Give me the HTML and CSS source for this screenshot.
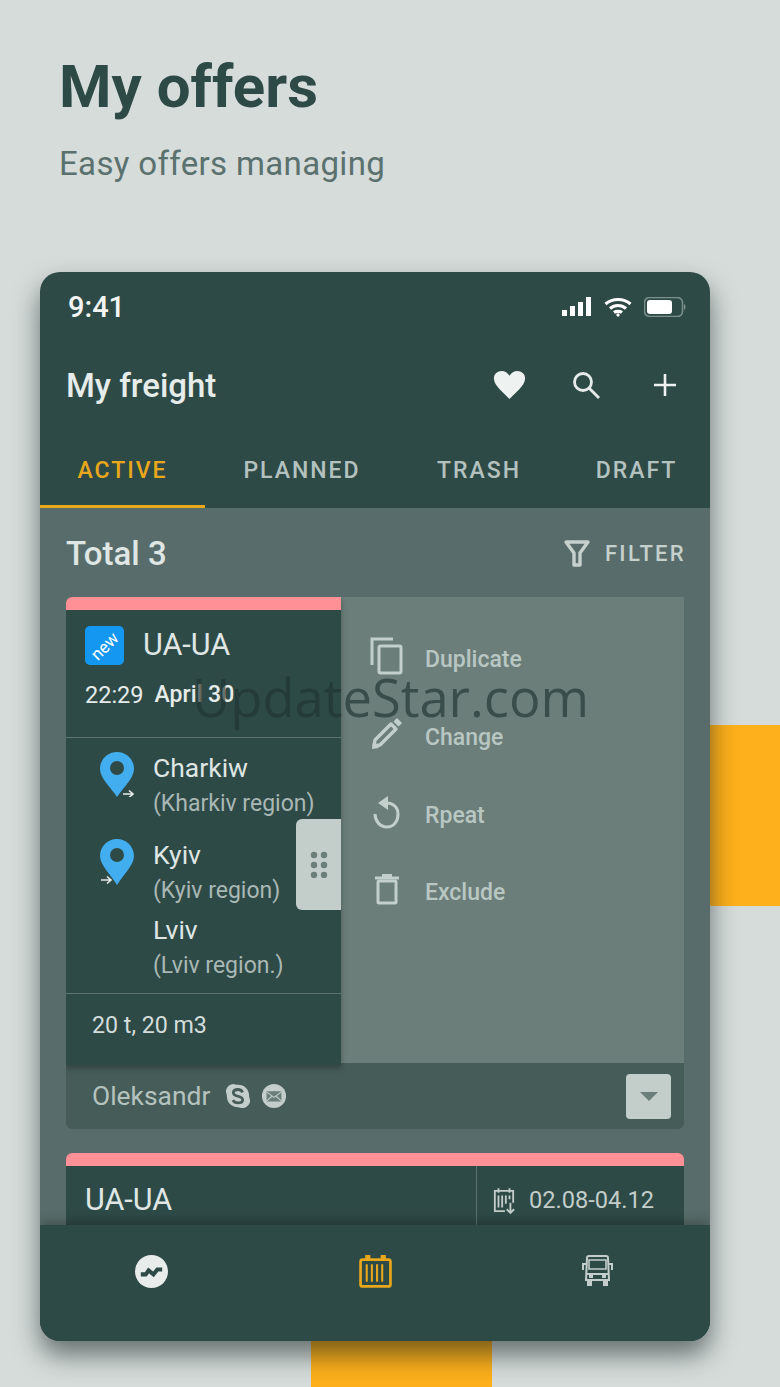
FILE: index.html
```html
<!DOCTYPE html>
<html lang="en">
<head>
    <meta charset="UTF-8">
    <meta name="viewport" content="width=device-width, initial-scale=1.0">
    <title>My offers</title>
    <link rel="stylesheet" href="styles.css">
</head>
<body>
    <div class="deco deco-right"></div>
    <div class="deco deco-bottom"></div>

    <header class="intro">
        <h1>My offers</h1>
        <p>Easy offers managing</p>
    </header>

    <div class="phone">
        <div class="status-bar">
            <span class="clock">9:41</span>
            <div class="status-icons">
                <svg width="30" height="20" viewBox="0 0 30 20"><path fill="#fff" d="M0 13h5v6H0zM8 9h5v10H8zM16 5h5v14h-5zM24 0h5v19h-5z"/></svg>
                <svg width="28" height="20" viewBox="0 0 28 20" fill="none" stroke="#fff" stroke-width="3.200"><path d="M1.500 7c7-6 18-6 25 0M6 11.500c4.500-4 11.500-4 16 0M10 15.500c2-1.500 6-1.500 8 0"/><circle cx="14" cy="18" r="1.200" fill="#fff" stroke-width="1"/></svg>
                <svg width="42" height="20" viewBox="0 0 42 20"><rect x="0.500" y="0.500" width="38" height="19" rx="5" fill="none" stroke="#7d918d" stroke-width="1.500"/><rect x="3" y="3" width="25" height="14" rx="3" fill="#fff"/><path fill="#7d918d" d="M40 7c1 .5 1.500 1.500 1.500 3s-.5 2.500-1.500 3z"/></svg>
            </div>
        </div>

        <div class="toolbar">
            <span class="toolbar-title">My freight</span>
            <div class="toolbar-icons">
                <svg width="33" height="30" viewBox="0 0 36 32" preserveAspectRatio="none"><path fill="#eef2f1" d="M18 31C12 24 1 17 1 9 1 4 5 1 9.500 1c3.500 0 6.500 2 8.500 5 2-3 5-5 8.500-5C31 1 35 4 35 9c0 8-11 15-17 22z"/></svg>
                <svg width="30" height="30" viewBox="0 0 30 30" fill="none" stroke="#e6ecea" stroke-width="2.800"><circle cx="12" cy="12" r="8.500"/><path d="M18 18l10 10"/></svg>
                <svg class="plus-icon" width="24" height="24" viewBox="0 0 24 24" fill="none" stroke="#eef2f1" stroke-width="2.600"><path d="M12 1v22M1 12h22"/></svg>
            </div>
        </div>

        <nav class="tabs">
            <a class="tab tab-active">ACTIVE</a>
            <a class="tab">PLANNED</a>
            <a class="tab">TRASH</a>
            <a class="tab">DRAFT</a>
        </nav>

        <main class="content">
            <div class="total-row">
                <span class="total">Total 3</span>
                <div class="filter">
                    <svg width="28" height="28" viewBox="0 0 28 28" fill="none" stroke="#c6d1ce" stroke-width="3.400"><path d="M3 3h22l-8 11v12h-6V14z" stroke-linejoin="round"/></svg>
                    <span>FILTER</span>
                </div>
            </div>

            <section class="offer">
                <div class="offer-main">
                    <div class="offer-panel">
                        <div class="pink-bar"></div>
                        <div class="offer-head">
                            <div class="head-line">
                                <div class="badge-new"><span>new</span></div>
                                <span class="route-code">UA-UA</span>
                            </div>
                            <div class="date-line"><span>22:29</span><span class="date-strong">April 30</span></div>
                        </div>
                        <div class="stops">
                            <div class="stop">
                                <svg class="pin" width="36" height="46" viewBox="0 0 36 46"><path fill="#42aef0" d="M18 1C9 1 1 8 1 18c0 9 11 19 17 28 6-9 17-19 17-28C35 8 27 1 18 1z"/><circle cx="18" cy="17" r="7" fill="#2e4a47"/><path fill="none" stroke="#e6ecea" stroke-width="1.600" d="M24 43h10M30 39.500l4 3.500-4 3.500"/></svg>
                                <div>
                                    <div class="city">Charkiw</div>
                                    <div class="region">(Kharkiv region)</div>
                                </div>
                            </div>
                            <div class="stop stop-kyiv">
                                <svg class="pin" width="36" height="48" viewBox="0 0 36 48"><path fill="#42aef0" d="M18 1C9 1 1 8 1 18c0 9 11 19 17 29 6-10 17-20 17-29C35 8 27 1 18 1z"/><circle cx="18" cy="17" r="7" fill="#2e4a47"/><path fill="none" stroke="#e6ecea" stroke-width="1.600" d="M2 42h10M8 38.500l4 3.500-4 3.500"/></svg>
                                <div>
                                    <div class="city">Kyiv</div>
                                    <div class="region">(Kyiv region)</div>
                                </div>
                            </div>
                            <div class="stop stop-lviv">
                                <div class="pin-space"></div>
                                <div>
                                    <div class="city">Lviv</div>
                                    <div class="region">(Lviv region.)</div>
                                </div>
                            </div>
                        </div>
                        <div class="cargo">20 t, 20 m3</div>
                        <div class="handle">
                            <svg width="18" height="27" viewBox="0 0 18 27" fill="#6b7e7a"><circle cx="4" cy="4" r="3.200"/><circle cx="14" cy="4" r="3.200"/><circle cx="4" cy="14" r="3.200"/><circle cx="14" cy="14" r="3.200"/><circle cx="4" cy="24" r="3.200"/><circle cx="14" cy="24" r="3.200"/></svg>
                        </div>
                    </div>

                    <div class="offer-menu">
                        <div class="menu-item">
                            <svg width="34" height="38" viewBox="0 0 34 38" fill="none" stroke="#c2cfcb" stroke-width="3"><path d="M23 2H2v26"/><rect x="9" y="9" width="22" height="27" rx="1.500"/></svg>
                            <span>Duplicate</span>
                        </div>
                        <div class="menu-item">
                            <svg width="34" height="32" viewBox="0 0 34 32" fill="none" stroke="#c2cfcb" stroke-width="3.400"><path d="M4 28l1-6L21 6l5 5-16 16z" stroke-linejoin="round"/><path fill="#c2cfcb" stroke="none" d="M23.500 3.500L27 0l5 5-3.500 3.500zM2 31l1-7 6 6z"/></svg>
                            <span>Change</span>
                        </div>
                        <div class="menu-item">
                            <svg width="34" height="33" viewBox="0 0 34 33" fill="none" stroke="#c2cfcb" stroke-width="3"><path d="M5 18c0 7 5 13 12 13s11-6 11-13S23 7 16 7"/><path fill="#c2cfcb" stroke="none" d="M18 0v14L8 7z"/></svg>
                            <span>Rpeat</span>
                        </div>
                        <div class="menu-item">
                            <svg width="34" height="31" viewBox="0 0 34 31" fill="none" stroke="#c2cfcb" stroke-width="3"><rect x="8" y="7" width="18" height="22" rx="1"/><path d="M5 4h24M12 1.500h10"/></svg>
                            <span>Exclude</span>
                        </div>
                    </div>
                </div>

                <div class="offer-foot">
                    <span class="contact">Oleksandr</span>
                    <svg class="foot-icon" width="26" height="26" viewBox="0 0 28 28"><path fill="#c3cdca" d="M9 1c2 0 3 1 5 1 7 0 12 5 12 12 0 2 1 3 1 5 0 4-4 8-8 8-2 0-3-1-5-1-7 0-12-5-12-12 0-2-1-3-1-5 0-4 4-8 8-8z"/><path fill="none" stroke="#465c59" stroke-width="3" d="M19 10c-1-2-3-3-5-3-3 0-5 1.500-5 3.500 0 5 10 2.500 10 7.500 0 2-2 3.500-5 3.500-2.500 0-4.500-1-5.500-3"/></svg>
                    <svg class="foot-icon" width="26" height="26" viewBox="0 0 28 28"><circle cx="14" cy="14" r="13" fill="#c3cdca"/><rect x="6" y="9" width="16" height="11" rx="1" fill="#6b7e7a"/><path fill="none" stroke="#c3cdca" stroke-width="1.200" d="M6 9.500l8 6 8-6M6 19.500l6-5.500M22 19.500l-6-5.500"/></svg>
                    <div class="expand"><span class="caret"></span></div>
                </div>
            </section>

            <section class="offer offer-next">
                <div class="pink-bar"></div>
                <div class="next-body">
                    <span class="route-code">UA-UA</span>
                    <div class="next-date">
                        <svg width="22" height="30" viewBox="0 0 24 30" fill="none" stroke="#c3cdca" stroke-width="2"><path d="M13 26H2V4h20v13"/><path d="M6 1v5M18 1v5M6 9v13M10 9v13M14 9v9M18 9v4"/><path d="M19 17v11M15 24l4 4 4-4"/></svg>
                        <span>02.08-04.12</span>
                    </div>
                </div>
            </section>
        </main>

        <nav class="bottom-nav">
            <svg width="33" height="33" viewBox="0 0 34 34"><circle cx="17" cy="17" r="17" fill="#e8ecea"/><path fill="none" stroke="#2e4a47" stroke-width="4.200" d="M6 20h5l3-4 5 4 4-5h5"/></svg>
            <svg width="33" height="33" viewBox="0 0 32 32" fill="none" stroke="#e9a71c" stroke-width="2.600"><rect x="1.500" y="4.500" width="29" height="26" rx="2"/><path stroke-width="2" d="M7.500 9v17M12.500 9v17M17.500 9v17M22.500 9v17"/><path fill="#e9a71c" stroke="none" d="M6 0h5v5H6zM21 0h5v5h-5z"/></svg>
            <svg width="31" height="31" viewBox="0 0 31 31" fill="none" stroke="#c3cdca" stroke-width="2"><path d="M5 3c0-1 1-2 2-2h17c1 0 2 1 2 2l1 22H4z"/><path d="M7 5h17v9H7z" stroke-width="1.600"/><path d="M5 9H1v6M26 9h4v6M5 19h21"/><path fill="#c3cdca" stroke="none" d="M7 20h4v3H7zM20 20h4v3h-4zM5 25h5v6H5zM21 25h5v6h-5z"/></svg>
        </nav>
    </div>

    <div class="watermark">UpdateStar.com</div>
</body>
</html>
```

FILE: styles.css
```css
* {
    box-sizing: border-box;
}

body {
    background-color: #d5dcda;
    font-family: Roboto, "Liberation Sans", sans-serif;
    margin: 0;
    width: 780px;
    height: 1387px;
    position: relative;
    overflow: hidden;
}

.deco {
    position: absolute;
    background-color: #fdb01b;
}

.deco-right {
    left: 710px;
    top: 725px;
    width: 70px;
    height: 181px;
}

.deco-bottom {
    left: 311px;
    top: 1300px;
    width: 181px;
    height: 87px;
}

.intro {
    height: 272px;
    padding: 50px 0 0 59px;
}

.intro h1 {
    margin: 0;
    font-size: 60px;
    line-height: 74px;
    font-weight: 700;
    color: #2e4a47;
}

.intro p {
    margin: 15px 0 0;
    font-size: 33px;
    line-height: 50px;
    color: #5b716e;
    letter-spacing: 0.35px;
}

.phone {
    position: relative;
    margin-left: 40px;
    width: 670px;
    height: 1069px;
    background-color: #2e4a47;
    border-radius: 20px;
    overflow: hidden;
    display: flex;
    flex-direction: column;
    box-shadow: 0 14px 26px rgba(15, 25, 25, 0.55);
}

.status-bar {
    height: 70px;
    padding: 0 24px 0 28px;
    display: flex;
    justify-content: space-between;
    align-items: center;
}

.clock {
    color: #f2f5f4;
    font-size: 29px;
    font-weight: 500;
}

.status-icons {
    display: flex;
    align-items: center;
    gap: 12px;
}

.toolbar {
    height: 72px;
    padding: 14px 33px 0 26px;
    display: flex;
    justify-content: space-between;
    align-items: center;
}

.toolbar-title {
    color: #e6ecea;
    font-size: 33px;
    font-weight: 500;
}

.toolbar-icons {
    display: flex;
    align-items: center;
    gap: 45px;
}

.plus-icon {
    margin-left: 7px;
}

.tabs {
    height: 94px;
    display: flex;
}

.tab {
    color: #b4c2bf;
    font-size: 23px;
    font-weight: 500;
    letter-spacing: 2px;
    text-align: center;
    height: 100%;
    padding-top: 39px;
    line-height: 36px;
}

.tab:nth-child(1) {
    width: 165px;
}

.tab:nth-child(2) {
    width: 194px;
}

.tab:nth-child(3) {
    width: 160px;
}

.tab:nth-child(4) {
    width: 151px;
    padding-left: 4px;
}

.tab-active {
    color: #e9a71c;
    border-bottom: 3px solid #e9a71c;
}

.content {
    flex: 1;
    background-color: #586d6b;
    overflow: hidden;
    padding: 0 26px;
}

.total-row {
    height: 89px;
    padding-top: 1px;
    display: flex;
    justify-content: space-between;
    align-items: center;
}

.total {
    color: #dfe6e4;
    font-size: 33px;
    font-weight: 500;
}

.filter {
    display: flex;
    align-items: center;
    gap: 14px;
    margin-right: -2px;
    color: #c6d1ce;
    font-size: 22px;
    font-weight: 500;
    letter-spacing: 2.300px;
}

.offer {
    border-radius: 6px 0 6px 6px;
    overflow: hidden;
}

.offer-main {
    display: flex;
    height: 468px;
    background-color: #465c59;
}

.offer-panel {
    position: relative;
    width: 275px;
    background-color: #2e4a47;
    box-shadow: 0 3px 6px rgba(0, 0, 0, 0.3);
}

.pink-bar {
    height: 13px;
    background-color: #ff9095;
}

.offer-head {
    height: 128px;
    padding: 16px 19px 0;
    border-bottom: 1px solid #5c7370;
}

.head-line {
    display: flex;
    align-items: center;
    gap: 19px;
    height: 39px;
}

.badge-new {
    width: 39px;
    height: 39px;
    border-radius: 5px;
    background-color: #1497f0;
    color: #fff;
    display: flex;
    align-items: center;
    justify-content: center;
}

.badge-new span {
    font-size: 17px;
    transform: rotate(-45deg);
}

.route-code {
    color: #dfe6e4;
    font-size: 30.500px;
    line-height: 36px;
}

.head-line .route-code {
    margin-bottom: 2px;
}

.date-line {
    margin-top: 16px;
    display: flex;
    gap: 11px;
    color: #e6ecea;
    font-size: 23.500px;
    line-height: 28px;
}

.date-strong {
    font-size: 23px;
    font-weight: 500;
}

.stops {
    height: 256px;
    padding: 13px 0 0 33px;
    border-bottom: 1px solid #5c7370;
}

.stop {
    display: flex;
    gap: 18px;
}

.stop-kyiv {
    margin-top: 17px;
}

.stop-lviv {
    margin-top: 5px;
}

.pin {
    flex: none;
    margin-top: 0;
}

.pin-space {
    width: 36px;
}

.city {
    color: #dfe6e4;
    font-size: 26.500px;
    line-height: 34px;
    margin-bottom: 1px;
}

.region {
    color: #a9b8b5;
    font-size: 23px;
    line-height: 35px;
    white-space: nowrap;
}

.cargo {
    padding: 16px 0 0 26px;
    color: #d4dddb;
    font-size: 23.200px;
    line-height: 30px;
}

.handle {
    position: absolute;
    left: 230px;
    top: 222px;
    width: 45px;
    height: 91px;
    background-color: #c3cdca;
    border-radius: 6px 0 0 6px;
    display: flex;
    align-items: center;
    justify-content: center;
}

.offer-menu {
    flex: 1;
    height: 466px;
    background-color: #6b7e7a;
    padding: 23px 0 0 29px;
}

.menu-item {
    height: 78px;
    display: flex;
    align-items: center;
    gap: 21px;
    color: #b9c7c3;
    font-size: 23px;
    font-weight: 500;
}

.menu-item svg {
    margin-top: -6px;
}

.menu-item:last-child {
    margin-top: -1px;
}

.offer-foot {
    height: 64px;
    background-color: #465c59;
    display: flex;
    align-items: center;
    padding: 0 13px 2px 26px;
}

.contact {
    color: #b5c3bf;
    font-size: 26.400px;
    margin-right: 15px;
}

.foot-icon {
    margin-right: 10px;
}

.expand {
    margin-left: auto;
    width: 45px;
    height: 45px;
    border-radius: 4px;
    background-color: #c3cdca;
    display: flex;
    align-items: center;
    justify-content: center;
}

.caret {
    border-left: 9px solid transparent;
    border-right: 9px solid transparent;
    border-top: 9px solid #6b7e7a;
}

.offer-next {
    margin-top: 24px;
    border-radius: 6px 6px 0 0;
    background-color: #2e4a47;
}

.next-body {
    display: flex;
    justify-content: space-between;
    height: 70px;
}

.next-body .route-code {
    padding: 16px 0 0 19px;
}

.next-date {
    width: 208px;
    border-left: 1px solid #5c7370;
    display: flex;
    align-items: flex-start;
    gap: 14px;
    padding: 20px 0 0 16px;
    color: #c3cdca;
    font-size: 23.600px;
}

.bottom-nav {
    height: 116px;
    background-color: #2e4a47;
    box-shadow: 0 -4px 10px rgba(0, 0, 0, 0.25);
    position: relative;
    display: flex;
    justify-content: space-between;
    align-items: flex-start;
    padding: 30px 97px 0 95px;
}

.watermark {
    position: absolute;
    left: 192px;
    top: 662px;
    font-family: "Open Sans", sans-serif;
    font-size: 52.500px;
    line-height: 70px;
    color: rgba(30, 50, 50, 0.65);
}
```
